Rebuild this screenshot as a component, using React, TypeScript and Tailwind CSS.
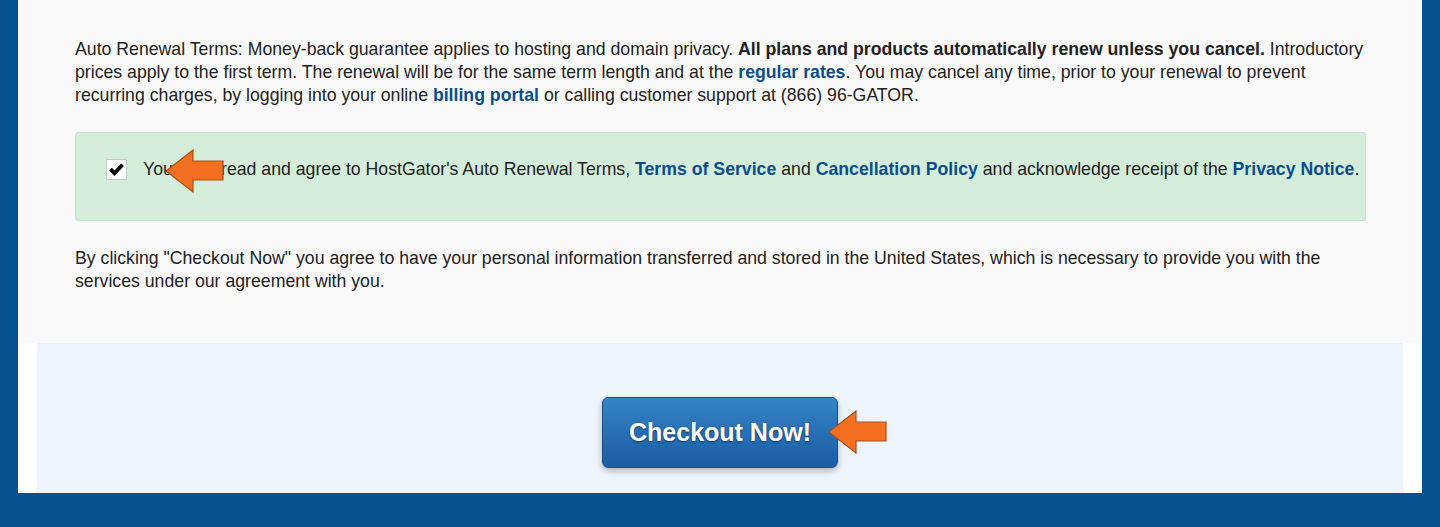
import React from 'react';

function Arrow({ className }: { className: string }) {
  return (
    <svg className={className} width="60" height="44" viewBox="0 0 60 44" fill="none">
      <path d="M1 22 L28 1 L28 12 L58 12 L58 31 L28 31 L28 43 Z" fill="#f47020" stroke="#a9501c" strokeWidth="1.2" strokeLinejoin="miter" />
    </svg>
  );
}

const link = 'font-bold text-[#0b4d8c]';

export default function App() {
  return (
    <div className="w-full h-[527px] bg-[#04528f] px-[18px] overflow-hidden font-['Liberation_Sans',Arial,sans-serif]">
      <div className="bg-white">
        {/* terms */}
        <div className="bg-[#f9f9f9] pl-[57px] pr-[56px] pt-[38px] pb-[50px] text-[17.7px] leading-[23px] text-[#222]">
          <p className="-mr-[20px]">
            Auto Renewal Terms: Money-back guarantee applies to hosting and domain privacy.{' '}
            <b>All plans and products automatically renew unless you cancel.</b> Introductory
            <br />
            prices apply to the first term. The renewal will be for the same term length and at the{' '}
            <a className={link}>regular rates</a>. You may cancel any time, prior to your renewal to prevent
            <br />
            recurring charges, by logging into your online <a className={link}>billing portal</a> or calling customer support at (866) 96-GATOR.
          </p>

          <div className="relative mt-[25px] h-[89px] bg-[#d4edda] border border-[#c0e3c9] rounded-[3px] pl-[30px] pt-[25px]">
            <label className="flex items-center gap-[16px]">
              <span className="w-[21px] h-[21px] bg-white border border-[#c8c8c8] flex items-center justify-center shrink-0">
                <svg width="15" height="13" viewBox="0 0 15 13">
                  <path d="M1.5 6 L5.5 10.3 L13.5 1.8" stroke="#000" strokeWidth="3.8" fill="none" />
                </svg>
              </span>
              <span className="whitespace-nowrap">
                You have read and agree to HostGator's Auto Renewal Terms, <a className={link}>Terms of Service</a> and{' '}
                <a className={link}>Cancellation Policy</a> and acknowledge receipt of the <a className={link}>Privacy Notice</a>.
              </span>
            </label>
            <Arrow className="absolute left-[89px] top-[16px]" />
          </div>

          <p className="mt-[26px] -mr-[20px]">
            By clicking "Checkout Now" you agree to have your personal information transferred and stored in the United States, which is necessary to provide you with the
            <br />
            services under our agreement with you.
          </p>
        </div>

        {/* checkout */}
        <div className="mx-[19px] h-[150px] bg-[#eef4fb] flex justify-center pt-[54px]">
          <div className="relative">
            <button className="w-[236px] h-[71px] rounded-[6px] bg-gradient-to-b from-[#3584c8] to-[#1a5ca3] border border-[#154f8c] shadow-[0_3px_6px_rgba(0,0,0,0.25)] text-white font-bold text-[25px] [text-shadow:0_1px_2px_rgba(0,0,0,0.5)]">
              Checkout Now!
            </button>
            <Arrow className="absolute left-[226px] top-[13px]" />
          </div>
        </div>
      </div>
    </div>
  );
}
